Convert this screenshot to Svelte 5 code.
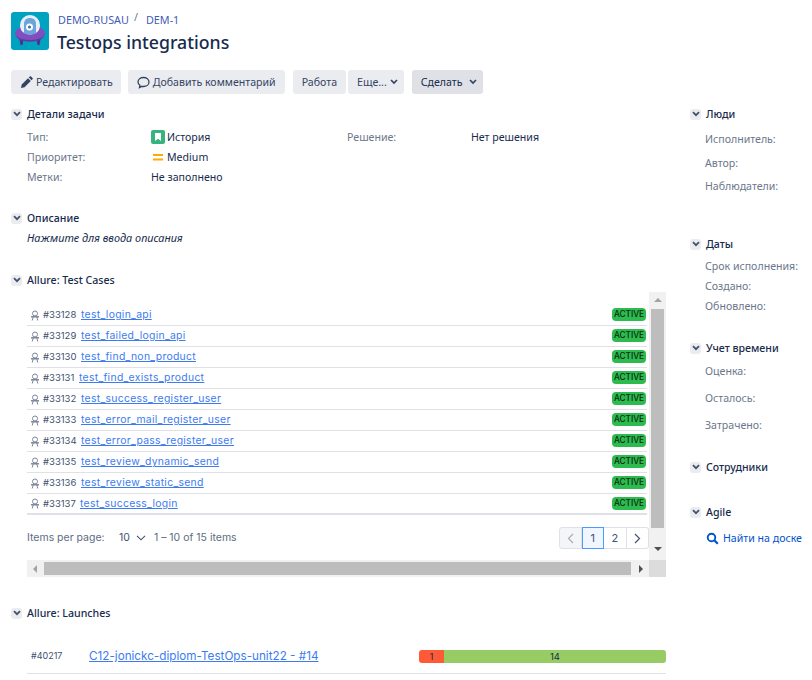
<script>
    const cases = [
        { id: 33128, name: "test_login_api", gap: 9 },
        { id: 33129, name: "test_failed_login_api", gap: 9 },
        { id: 33130, name: "test_find_non_product", gap: 9 },
        { id: 33131, name: "test_find_exists_product", gap: 7 },
        { id: 33132, name: "test_success_register_user", gap: 9 },
        { id: 33133, name: "test_error_mail_register_user", gap: 9 },
        { id: 33134, name: "test_error_pass_register_user", gap: 9 },
        { id: 33135, name: "test_review_dynamic_send", gap: 9 },
        { id: 33136, name: "test_review_static_send", gap: 9 },
        { id: 33137, name: "test_success_login", gap: 8 }
    ];
</script>

{#snippet toggle()}
    <span class="toggle">
        <svg width="8" height="6" viewBox="0 0 8 6"><path d="M1 1.200l3 3 3-3" fill="none" stroke="#42526e" stroke-width="1.800" /></svg>
    </span>
{/snippet}

{#snippet chevron()}
    <svg class="chev" width="8" height="6" viewBox="0 0 8 6"><path d="M1 1l3 3 3-3" fill="none" stroke="#344563" stroke-width="1.700" /></svg>
{/snippet}

<div class="page">
    <header class="head">
        <svg class="logo" width="38" height="38" viewBox="0 0 38 38">
            <rect width="38" height="38" rx="3" fill="#00a3bf" />
            <path d="M8.500 27l1 6h2l1-5zM29.500 27l-1 6h-2l-1-5z" fill="#4f2f91" />
            <ellipse cx="19" cy="21.500" rx="15" ry="8" fill="#7f4fc0" />
            <path d="M4.500 23.500c3 3 8 4.500 14.500 4.500s11.500-1.500 14.500-4.500C31 28 25.500 29.500 19 29.500S7 28 4.500 23.500z" fill="#5b3a9b" />
            <path d="M9 13a10 10 0 0 1 20 0c0 6-4 9.500-10 9.500S9 19 9 13z" fill="#e6f0fa" />
            <path d="M13 21V12c0-4 2.500-6 6-6s6 2 6 6v9c-3 2-9 2-12 0z" fill="#6ea4dc" />
            <circle cx="18.500" cy="15" r="3.500" fill="#fff" />
            <circle cx="18.500" cy="15" r="1.600" fill="#3f6fb0" />
        </svg>
        <div>
            <div class="crumbs">
                <a href="#p">DEMO-RUSAU</a><span class="slash">/</span><a href="#i">DEM-1</a>
            </div>
            <h1>Testops integrations</h1>
        </div>
    </header>

    <div class="toolbar">
        <button class="btn edit">
            <svg width="13" height="13" viewBox="0 0 13 13"><path d="M1 12l.7-3.500 6.300-6.300 2.800 2.800-6.300 6.300zM8.800 1.400l.9-.9a1 1 0 0 1 1.400 0l1.400 1.400a1 1 0 0 1 0 1.400l-.9.9z" fill="#344563" /></svg>
            Редактировать
        </button>
        <button class="btn">
            <svg width="13" height="13" viewBox="0 0 13 13"><path d="M6.500 1.500c3 0 5.500 1.900 5.500 4.500s-2.500 4.500-5.500 4.500c-.6 0-1.200-.1-1.700-.2L2.500 11.500l.4-2.300C1.700 8.400 1 7.300 1 6c0-2.600 2.500-4.500 5.500-4.500z" fill="none" stroke="#344563" stroke-width="1.300" /></svg>
            Добавить комментарий
        </button>
        <div class="group">
            <button class="btn">Работа</button>
            <button class="btn drop">Еще... {@render chevron()}</button>
        </div>
        <button class="btn drop dark">Сделать {@render chevron()}</button>
    </div>

    <div class="columns">
        <main class="left">
            <section class="details">
                <h2>{@render toggle()}Детали задачи</h2>
                <div class="fields">
                    <span class="label">Тип:</span>
                    <span class="value">
                        <svg width="14" height="14" viewBox="0 0 14 14"><rect width="14" height="14" rx="2" fill="#36b37e" /><path d="M4 3h6v8L7 8.800 4 11z" fill="#fff" /></svg>
                        История
                    </span>
                    <span class="label">Решение:</span>
                    <span class="value">Нет решения</span>
                    <span class="label">Приоритет:</span>
                    <span class="value">
                        <svg width="14" height="14" viewBox="0 0 14 14"><path d="M2 4h10v2H2zM2 8.500h10v2H2z" fill="#ffab00" /></svg>
                        Medium
                    </span>
                    <span></span><span></span>
                    <span class="label">Метки:</span>
                    <span class="value">Не заполнено</span>
                </div>
            </section>

            <section class="description">
                <h2>{@render toggle()}Описание</h2>
                <p><em>Нажмите для ввода описания</em></p>
            </section>

            <section class="allure">
                <h2>{@render toggle()}Allure: Test Cases</h2>
                <div class="frame">
                    <div class="content">
                        <ul class="cases">
                            {#each cases as c}
                                <li>
                                    <svg class="robot" width="10" height="11" viewBox="0 0 10 11"><circle cx="5" cy="3.500" r="2.500" fill="none" stroke="#7a869a" /><path d="M1 6.800h8" fill="none" stroke="#6b778c" stroke-width="1.300" /><path d="M2.200 10.500L3.200 7M7.800 10.500L6.800 7" fill="none" stroke="#7a869a" /></svg>
                                    <span class="num">#{c.id}</span>
                                    <a href="#c" style="margin-left: {c.gap}px">{c.name}</a>
                                    <span class="badge">ACTIVE</span>
                                </li>
                            {/each}
                        </ul>
                        <div class="pager">
                            <span class="per">Items per page:</span>
                            <span class="size">10</span>
                            <svg width="10" height="6" viewBox="0 0 10 6"><path d="M1 .8l4 4 4-4" fill="none" stroke="#42526e" stroke-width="1.100" /></svg>
                            <span class="range">1 – 10 of 15 items</span>
                            <div class="pages">
                                <span class="pg off"><svg width="7" height="11" viewBox="0 0 7 11"><path d="M6 1L1.500 5.500 6 10" fill="none" stroke="#a5adba" stroke-width="1.200" /></svg></span>
                                <span class="pg on">1</span>
                                <span class="pg">2</span>
                                <span class="pg"><svg width="7" height="11" viewBox="0 0 7 11"><path d="M1 1l4.500 4.500L1 10" fill="none" stroke="#42526e" stroke-width="1.200" /></svg></span>
                            </div>
                        </div>
                    </div>
                    <div class="vbar">
                        <span class="arrow up"></span>
                        <span class="thumb"></span>
                        <span class="arrow down"></span>
                    </div>
                    <div class="hbar">
                        <span class="arrow lft"></span>
                        <span class="thumb"></span>
                        <span class="arrow rgt"></span>
                    </div>
                    <div class="corner"></div>
                </div>
            </section>

            <section class="launches">
                <h2>{@render toggle()}Allure: Launches</h2>
                <div class="launch">
                    <span class="lnum">#40217</span>
                    <a href="#l">C12-jonickc-diplom-TestOps-unit22 - #14</a>
                    <div class="stat">
                        <span class="fail">1</span>
                        <span class="pass">14</span>
                    </div>
                </div>
            </section>
        </main>

        <aside class="right">
            <section class="people">
                <h2>{@render toggle()}Люди</h2>
                <dl>
                    <dt>Исполнитель:</dt>
                    <dt>Автор:</dt>
                    <dt>Наблюдатели:</dt>
                </dl>
            </section>
            <section class="dates">
                <h2>{@render toggle()}Даты</h2>
                <dl class="tight">
                    <dt>Срок исполнения:</dt>
                    <dt>Создано:</dt>
                    <dt>Обновлено:</dt>
                </dl>
            </section>
            <section class="time">
                <h2>{@render toggle()}Учет времени</h2>
                <dl class="wide">
                    <dt>Оценка:</dt>
                    <dt>Осталось:</dt>
                    <dt>Затрачено:</dt>
                </dl>
            </section>
            <section class="staff">
                <h2>{@render toggle()}Сотрудники</h2>
            </section>
            <section class="agile">
                <h2>{@render toggle()}Agile</h2>
                <a href="#b" class="find">
                    <svg width="13" height="13" viewBox="0 0 13 13"><circle cx="5.500" cy="5.500" r="3.800" fill="none" stroke="#0052cc" stroke-width="1.900" /><path d="M8.300 8.300l3.500 3.500" stroke="#0052cc" stroke-width="2.200" /></svg>
                    Найти на доске
                </a>
            </section>
        </aside>
    </div>
</div>

<style>
    :global(body) {
        background: #fff;
        overflow: hidden;
    }

    .page {
        width: 812px;
        height: 680px;
        overflow: hidden;
        box-sizing: border-box;
        padding: 12px 0 0 11px;
        font-family: "Noto Sans", "Open Sans", sans-serif;
        font-size: 10.600px;
        line-height: 16px;
        color: #172b4d;
    }

    a {
        color: #0052cc;
        text-decoration: none;
    }

    .head {
        display: flex;
        gap: 8px;
        align-items: flex-start;
    }

    .logo {
        display: block;
        flex: none;
    }

    .crumbs {
        height: 16px;
        display: flex;
        padding-left: 1px;
        font-size: 10.800px;
    }

    .crumbs a {
        color: #3f5cb8;
    }

    .slash {
        color: #6b778c;
        margin: -3px 8px 0 5px;
    }

    h1 {
        margin: 2px 0 0;
        font-size: 17.700px;
        line-height: 24px;
        font-weight: 500;
        color: #172b4d;
    }

    .toolbar {
        display: flex;
        gap: 7px;
        margin-top: 16px;
    }

    .group {
        display: flex;
        gap: 2px;
        margin-left: 1px;
        margin-right: 1px;
    }

    .btn {
        height: 24px;
        padding: 0 9px;
        border: none;
        border-radius: 3px;
        background: #ebecf0;
        color: #344563;
        font: inherit;
        display: flex;
        align-items: center;
        gap: 3px;
    }

    .btn.edit {
        padding-right: 8px;
    }

    .btn.drop {
        padding-right: 6px;
    }

    .btn.dark {
        background: #dfe1e6;
        color: #172b4d;
    }

    .btn.dark .chev {
        margin-left: 3px;
    }

    .columns {
        display: flex;
        margin-top: 12px;
    }

    .left {
        width: 655px;
        flex: none;
    }

    .right {
        margin-left: 24px;
        width: 130px;
        flex: none;
    }

    section {
        margin: 0;
    }

    h2 {
        margin: 0;
        height: 16px;
        display: flex;
        align-items: center;
        gap: 5px;
        font-size: 10.600px;
        font-weight: 500;
        color: #172b4d;
        white-space: nowrap;
    }

    .toggle {
        width: 11px;
        height: 11px;
        border-radius: 3px;
        background: #ebecf0;
        display: flex;
        align-items: center;
        justify-content: center;
        flex: none;
    }

    .fields {
        display: grid;
        grid-template-columns: 124px 196px 124px 1fr;
        grid-auto-rows: 20px;
        margin: 5px 0 0 16px;
        align-items: center;
    }

    .label {
        color: #6b778c;
    }

    .value {
        display: flex;
        align-items: center;
        gap: 2px;
    }

    .description {
        margin-top: 23px;
    }

    .description p {
        margin: 4px 0 0 16px;
        font-size: 10.900px;
        color: #172b4d;
    }

    .allure {
        margin-top: 26px;
    }

    .frame {
        position: relative;
        width: 639px;
        height: 285px;
        margin: 4px 0 0 16px;
        overflow: hidden;
    }

    .content {
        width: 620px;
        padding-top: 13px;
    }

    .cases {
        list-style: none;
        margin: 0;
        padding: 0;
        border-bottom: 2px solid #dfe1e6;
    }

    .cases li {
        height: 20px;
        border-bottom: 1px solid #dfe1e6;
        display: flex;
        align-items: center;
        padding-left: 3px;
        font-family: Inter, sans-serif;
        font-size: 9.500px;
    }

    .cases li:last-child {
        height: 19px;
        border-bottom: none;
    }

    .robot {
        margin-right: 3px;
        flex: none;
    }

    .num {
        color: #42526e;
        width: 29px;
        white-space: nowrap;
    }

    .cases a {
        color: #3d7bf0;
        text-decoration: underline;
        font-size: 10.400px;
        letter-spacing: 0.300px;
    }

    .badge {
        margin-left: auto;
        margin-right: 1px;
        margin-bottom: 1px;
        width: 34px;
        height: 13px;
        border-radius: 4px;
        background: #2dba4e;
        color: #0b2a12;
        font-size: 8.300px;
        font-weight: 500;
        line-height: 13px;
        text-align: center;
    }

    .cases li:last-child .badge {
        margin-bottom: 0;
    }

    .pager {
        display: flex;
        align-items: center;
        margin-top: 11px;
        height: 24px;
        font-family: Inter, sans-serif;
        font-size: 10.500px;
        color: #5e6c84;
    }

    .per {
        width: 92px;
    }

    .size {
        margin-right: 6px;
        color: #42526e;
    }

    .range {
        margin-left: 8px;
    }

    .pages {
        display: flex;
        margin-left: auto;
        margin-right: -2px;
        height: 22px;
    }

    .pg {
        width: 22.500px;
        box-sizing: border-box;
        border: 1px solid #dfe1e6;
        border-left: none;
        display: flex;
        align-items: center;
        justify-content: center;
        font-size: 11px;
        color: #42526e;
    }

    .pg.off {
        border-left: 1px solid #dfe1e6;
        border-radius: 3px 0 0 3px;
        background: #f4f5f7;
    }

    .pg:last-child {
        border-radius: 0 3px 3px 0;
    }

    .pg.on {
        border: 1px solid #4c9aff;
        background: #f0f6ff;
    }

    .vbar {
        position: absolute;
        top: 0;
        right: 0;
        width: 17px;
        height: 268px;
        background: #f1f1f1;
        display: flex;
        flex-direction: column;
        align-items: center;
    }

    .vbar .thumb {
        width: 13px;
        height: 219px;
        margin-top: 7px;
        background: #bdbdbd;
    }

    .hbar {
        position: absolute;
        left: 0;
        bottom: 0;
        width: 622px;
        height: 17px;
        background: #f1f1f1;
        display: flex;
        align-items: center;
    }

    .hbar .thumb {
        width: 587px;
        height: 13px;
        margin-left: 7px;
        background: #bdbdbd;
    }

    .corner {
        position: absolute;
        right: 0;
        bottom: 0;
        width: 17px;
        height: 17px;
        background: #dcdcdc;
    }

    .arrow {
        width: 0;
        height: 0;
        border: 4px solid transparent;
        flex: none;
    }

    .arrow.up {
        border-top: none;
        border-bottom: 4px solid #a3a3a3;
        margin-top: 6px;
    }

    .arrow.down {
        border-bottom: none;
        border-top: 4px solid #505050;
        margin-top: 19px;
    }

    .arrow.lft {
        border-left: none;
        border-right: 4px solid #a3a3a3;
        margin-left: 6px;
    }

    .arrow.rgt {
        border-right: none;
        border-left: 4px solid #505050;
        margin-left: 8px;
    }

    .launches {
        margin-top: 28px;
    }

    .launch {
        display: flex;
        align-items: center;
        margin: 22px 0 0 16px;
        width: 639px;
        height: 31px;
        box-sizing: border-box;
        border-bottom: 1px solid #dfe1e6;
        padding: 0 0 4px 4px;
    }

    .lnum {
        width: 58px;
        font-family: Inter, sans-serif;
        font-size: 9px;
        color: #42526e;
    }

    .launch a {
        color: #3d7bf0;
        text-decoration: underline;
        font-family: Inter, sans-serif;
        font-size: 11.700px;
    }

    .stat {
        margin-left: auto;
        width: 247px;
        height: 13px;
        display: flex;
        border-radius: 3px;
        overflow: hidden;
        font-family: Inter, sans-serif;
        font-size: 9.500px;
        line-height: 13px;
        text-align: center;
        color: #172b4d;
    }

    .fail {
        width: 25px;
        background: #ff5a38;
    }

    .pass {
        flex: 1;
        background: #97cc64;
    }

    .right dl {
        margin: 6px 0 0 15px;
    }

    .right dt {
        height: 23.500px;
        line-height: 23.500px;
        color: #6b778c;
        white-space: nowrap;
    }

    .right dl.tight {
        margin-top: 4px;
    }

    .right dl.tight dt {
        height: 20px;
        line-height: 20px;
    }

    .right dl.wide {
        margin-top: 2px;
    }

    .right dl.wide dt {
        height: 27px;
        line-height: 27px;
    }

    .dates {
        margin-top: 37.500px;
    }

    .time {
        margin-top: 24px;
    }

    .staff {
        margin-top: 20px;
    }

    .agile {
        margin-top: 29px;
    }

    .find {
        display: flex;
        align-items: center;
        gap: 4px;
        margin: 10px 0 0 16px;
        white-space: nowrap;
    }
</style>
